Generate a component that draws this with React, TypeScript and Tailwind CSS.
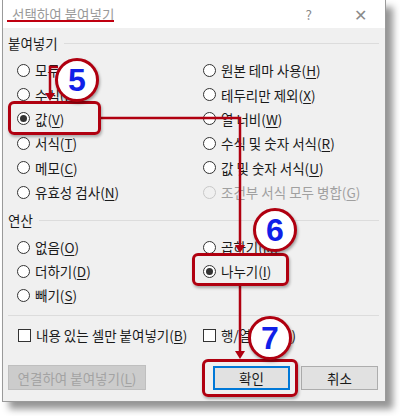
import React from "react";

function M({ t, k }: { t: string; k?: string }) {
  return (
    <span>
      {t}
      {k && (
        <>
          (<span className="underline underline-offset-[2px]">{k}</span>)
        </>
      )}
    </span>
  );
}

function Radio({ checked, disabled }: { checked?: boolean; disabled?: boolean }) {
  return (
    <span
      className={
        disabled
          ? "flex h-[13px] w-[13px] shrink-0 items-center justify-center rounded-full border border-[#c8c8c8] bg-[#f0f0f0]"
          : "flex h-[13px] w-[13px] shrink-0 items-center justify-center rounded-full border border-[#333] bg-white"
      }
    >
      {checked && <span className="h-[7px] w-[7px] rounded-full bg-[#333]" />}
    </span>
  );
}

function RadioRow({ t, k, checked, disabled }: { t: string; k: string; checked?: boolean; disabled?: boolean }) {
  return (
    <div className={`flex h-[24.4px] items-center gap-[5px] ${disabled ? "text-[#a0a0a0]" : "text-[#1a1a1a]"}`}>
      <Radio checked={checked} disabled={disabled} />
      <M t={t} k={k} />
    </div>
  );
}

function OpRow({ t, k, checked }: { t: string; k: string; checked?: boolean }) {
  return (
    <div className="flex h-[24px] items-center gap-[5px] text-[#1a1a1a]">
      <Radio checked={checked} />
      <M t={t} k={k} />
    </div>
  );
}

function GroupLabel({ t }: { t: string }) {
  return (
    <div className="flex h-[18px] items-center gap-[6px] pr-[6px]">
      <span className="text-[#1a1a1a]">{t}</span>
      <span className="h-px flex-1 bg-[#dcdcdc]" />
    </div>
  );
}

function Check({ t, k }: { t: string; k: string }) {
  return (
    <div className="flex h-[18px] items-center gap-[5px] text-[#1a1a1a]">
      <span className="h-[13px] w-[13px] shrink-0 border border-[#333] bg-white" />
      <M t={t} k={k} />
    </div>
  );
}

function Circle({ n, cls }: { n: string; cls: string }) {
  return (
    <div
      className={`absolute flex h-[44px] w-[44px] items-center justify-center rounded-full border-[3px] border-[#b00010] bg-white shadow-[1px_2px_3px_rgba(0,0,0,0.35)] ${cls}`}
    >
      <span className="font-['Liberation_Sans',Arial,sans-serif] text-[32px] font-bold leading-none text-[#1020e8]">{n}</span>
    </div>
  );
}

export default function App() {
  return (
    <div className="relative h-[416px] w-[400px] overflow-hidden bg-white font-['Noto_Sans_CJK_KR',sans-serif] text-[13.5px] leading-[16px]">
      {/* dialog */}
      <div className="ml-[2px] flex h-[402px] w-[384px] flex-col border border-t-0 border-[#9a9a9a] shadow-[7px_7px_7px_rgba(0,0,0,0.42)]">
        <div className="flex h-[28px] shrink-0 items-center bg-white pl-[9px]">
          <span className="text-[#9a9a9a]">선택하여 붙여넣기</span>
          <span className="ml-auto mr-[42px] text-[#8a8a8a]">?</span>
          <span className="mr-[18px] text-[16px] text-[#8a8a8a]">✕</span>
        </div>
        <div className="flex flex-1 flex-col bg-[#f0f0f0] pl-[5px] pt-[6px]">
          <GroupLabel t="붙여넣기" />
          <div className="mt-[6px] flex pl-[9px]">
            <div className="w-[186px]">
              <RadioRow t="모두" k="A" />
              <RadioRow t="수식" k="F" />
              <RadioRow t="값" k="V" checked />
              <RadioRow t="서식" k="T" />
              <RadioRow t="메모" k="C" />
              <RadioRow t="유효성 검사" k="N" />
            </div>
            <div>
              <RadioRow t="원본 테마 사용" k="H" />
              <RadioRow t="테두리만 제외" k="X" />
              <RadioRow t="열 너비" k="W" />
              <RadioRow t="수식 및 숫자 서식" k="R" />
              <RadioRow t="값 및 숫자 서식" k="U" />
              <RadioRow t="조건부 서식 모두 병합" k="G" disabled />
            </div>
          </div>
          <div className="mt-[7px]">
            <GroupLabel t="연산" />
          </div>
          <div className="mt-[6px] flex pl-[9px]">
            <div className="w-[186px]">
              <OpRow t="없음" k="O" />
              <OpRow t="더하기" k="D" />
              <OpRow t="빼기" k="S" />
            </div>
            <div>
              <OpRow t="곱하기" k="M" />
              <OpRow t="나누기" k="I" checked />
            </div>
          </div>
          <div className="mr-[6px] mt-[8px] h-px bg-[#dcdcdc]" />
          <div className="mt-[10px] flex pl-[10px]">
            <div className="w-[185px]">
              <Check t="내용 있는 셀만 붙여넣기" k="B" />
            </div>
            <Check t="행/열 바꿈" k="E" />
          </div>
          <div className="mt-[21px] flex items-center pr-[7px]">
            <div className="flex h-[25px] w-[138px] items-center justify-center whitespace-nowrap border border-[#bfbfbf] bg-[#cccccc] text-[#a3a3a3]">
              <M t="연결하여 붙여넣기" k="L" />
            </div>
            <div className="ml-auto flex h-[24px] w-[77px] items-center justify-center border-2 border-[#0078d7] bg-[#e1e1e1] text-[#1a1a1a]">
              확인
            </div>
            <div className="ml-[11px] flex h-[24px] w-[77px] items-center justify-center border border-[#adadad] bg-[#e1e1e1] text-[#1a1a1a]">
              취소
            </div>
          </div>
        </div>
      </div>

      {/* annotations */}
      <div className="pointer-events-none absolute inset-0">
        <div className="absolute left-[7px] top-[20px] h-[2px] w-[107px] bg-[#c00010]" />
        <svg className="absolute left-0 top-0" width="400" height="416" viewBox="0 0 400 416">
          <g stroke="#b00010" strokeWidth="2.5" fill="none">
            <polyline points="58,67 50,67 50,94" />
            <polyline points="100,118 240,118 240,246" />
            <polyline points="240,286 240,352" />
          </g>
          <g fill="#b00010">
            <polygon points="45,93 55,93 50,101" />
            <polygon points="235,245 245,245 240,253" />
            <polygon points="235,351 245,351 240,359" />
          </g>
        </svg>
        <div className="absolute left-[8px] top-[101px] h-[34px] w-[93px] rounded-[6px] border-[3px] border-[#b00010] shadow-[1px_2px_3px_rgba(0,0,0,0.3)]" />
        <div className="absolute left-[192px] top-[253px] h-[33px] w-[97px] rounded-[6px] border-[3px] border-[#b00010] shadow-[1px_2px_3px_rgba(0,0,0,0.3)]" />
        <div className="absolute left-[202px] top-[359px] h-[38px] w-[96px] rounded-[6px] border-[3px] border-[#b00010] shadow-[1px_2px_3px_rgba(0,0,0,0.3)]" />
        <Circle n="5" cls="left-[55px] top-[58px]" />
        <Circle n="6" cls="left-[253px] top-[208px]" />
        <Circle n="7" cls="left-[248px] top-[316px]" />
      </div>
    </div>
  );
}
